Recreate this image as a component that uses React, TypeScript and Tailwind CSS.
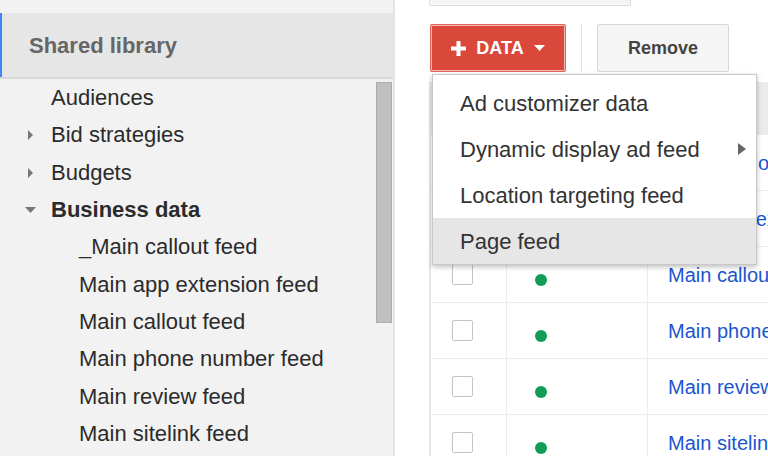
import { useState } from 'react';

type NavItem = {
  label: string;
  level: 1 | 2;
  arrow?: 'right' | 'down';
  bold?: boolean;
};

const navItems: NavItem[] = [
  { label: 'Audiences', level: 1 },
  { label: 'Bid strategies', level: 1, arrow: 'right' },
  { label: 'Budgets', level: 1, arrow: 'right' },
  { label: 'Business data', level: 1, arrow: 'down', bold: true },
  { label: '_Main callout feed', level: 2 },
  { label: 'Main app extension feed', level: 2 },
  { label: 'Main callout feed', level: 2 },
  { label: 'Main phone number feed', level: 2 },
  { label: 'Main review feed', level: 2 },
  { label: 'Main sitelink feed', level: 2 },
];

const feeds = [
  '_Main callout feed',
  'Main app extension feed',
  'Main callout feed',
  'Main phone number feed',
  'Main review feed',
  'Main sitelink feed',
];

const menuItems = ['Ad customizer data', 'Dynamic display ad feed', 'Location targeting feed', 'Page feed'];

function Sidebar() {
  return (
    <div className="relative w-[395px] shrink-0 h-full bg-[#f2f2f2] border-r-2 border-[#e4e4e4]">
      <div className="h-[13px]" />
      <div className="h-[64px] bg-[#e6e6e6] border-l-2 border-[#4285f4] flex items-center pl-[27px]">
        <span className="text-[22px] font-bold text-[#666]">Shared library</span>
      </div>
      <div className="h-[2px] bg-[#d9d9d9]" />
      <div>
        {navItems.map((item, i) => (
          <div key={i} className="h-[37.33px] flex items-center relative">
            {item.arrow === 'right' && (
              <svg className="absolute left-[27px] top-[14px]" width="7" height="10" viewBox="0 0 7 10">
                <path d="M1 0 L6 5 L1 10 Z" fill="#777" />
              </svg>
            )}
            {item.arrow === 'down' && (
              <svg className="absolute left-[25px] top-[16px]" width="11" height="6" viewBox="0 0 11 6">
                <path d="M0 0 L11 0 L5.5 6 Z" fill="#777" />
              </svg>
            )}
            <span
              className={`text-[22px] text-[#2b2b2b] ${item.bold ? 'font-bold' : ''} ${
                item.level === 1 ? 'pl-[51px]' : 'pl-[79px]'
              }`}
            >
              {item.label}
            </span>
          </div>
        ))}
      </div>
      {/* scrollbar thumb */}
      <div className="absolute left-[376px] top-[82px] w-[16px] h-[241px] bg-[#bfbfbf] border border-[#adadad]" />
    </div>
  );
}

function Checkbox() {
  return <div className="w-[21px] h-[21px] border border-[#c4c4c4] rounded-[2px] bg-white" />;
}

function DataMenu() {
  const [active] = useState(3);
  return (
    <div className="absolute left-[37px] top-[74px] w-[325px] bg-white border border-[#c8c8c8] shadow-[0_2px_5px_rgba(0,0,0,0.25)] pt-[5px]">
      {menuItems.map((label, i) => (
        <div
          key={label}
          className={`h-[46px] flex items-center justify-between pl-[27px] pr-[10px] text-[22px] text-[#333] ${
            i === active ? 'bg-[#e6e6e6]' : ''
          }`}
        >
          <span>{label}</span>
          {i === 1 && (
            <svg width="8" height="12" viewBox="0 0 8 12">
              <path d="M0 0 L8 6 L0 12 Z" fill="#666" />
            </svg>
          )}
        </div>
      ))}
    </div>
  );
}

export default function App() {
  return (
    <div className="w-[768px] h-[456px] overflow-hidden flex bg-white font-['Liberation_Sans',Arial,sans-serif]">
      <Sidebar />
      <div className="relative flex-1 min-w-0 h-full overflow-hidden">
        {/* partially visible button above */}
        <div className="ml-[34px] w-[202px] h-[6px] bg-[#f5f5f5] border border-t-0 border-[#dcdcdc] rounded-b-[2px]" />

        <div className="mt-[18px] ml-[35px] flex items-center h-[48px]">
          <button className="h-[48px] w-[136px] shrink-0 rounded-[2px] bg-[#d9483b] outline outline-1 outline-[#e2655a] -outline-offset-1 border-2 border-[#f3b5ae] flex items-center justify-center gap-[10px] text-white">
            <svg width="15" height="15" viewBox="0 0 15 15">
              <path d="M5.5 0 H9.5 V5.5 H15 V9.5 H9.5 V15 H5.5 V9.5 H0 V5.5 H5.5 Z" fill="#fff" />
            </svg>
            <span className="text-[18px] font-bold">DATA</span>
            <svg width="11" height="6" viewBox="0 0 11 6">
              <path d="M0 0 L11 0 L5.5 6 Z" fill="#fff" />
            </svg>
          </button>
          <div className="w-px h-[48px] bg-[#e5e5e5] ml-[15px] shrink-0" />
          <button className="ml-[15px] h-[48px] w-[132px] shrink-0 rounded-[2px] bg-[#f5f5f5] border border-[#d9d9d9] text-[18px] font-bold text-[#444]">
            Remove
          </button>
        </div>

        {/* table */}
        <div className="mt-[10px] ml-[34px] w-[600px] border-l-2 border-[#e6e6e6]">
          <div className="h-[53px] bg-[#ebebeb]" />
          {feeds.map((name) => (
            <div key={name} className="h-[56px] flex border-b border-[#ececec]">
              <div className="w-[76px] shrink-0 flex items-center pl-[21px] border-r border-[#ececec]">
                <Checkbox />
              </div>
              <div className="w-[141px] shrink-0 flex items-center pl-[28px] pt-[10px] border-r border-[#ececec]">
                <div className="w-[12px] h-[12px] rounded-full bg-[#0f9d58]" />
              </div>
              <div className="flex-1 min-w-0 flex items-center pl-[20px] whitespace-nowrap">
                <span className="text-[20px] text-[#1a55cf]">{name}</span>
              </div>
            </div>
          ))}
        </div>

        <DataMenu />
      </div>
    </div>
  );
}
